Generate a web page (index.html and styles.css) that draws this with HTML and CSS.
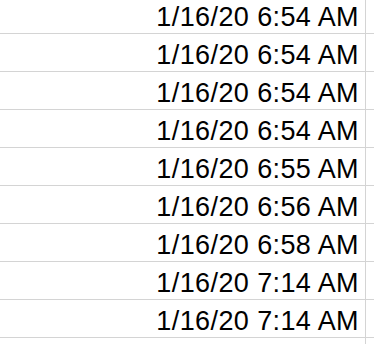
FILE: index.html
```html
<!DOCTYPE html>
<html lang="en">
<head>
    <meta charset="UTF-8">
    <title>Sheet</title>
    <link rel="stylesheet" href="styles.css">
</head>
<body>
    <div class="sheet">
        <div class="row first"><div class="cell">1/16/20 6:54 AM</div><div class="cell empty"></div></div>
        <div class="row"><div class="cell">1/16/20 6:54 AM</div><div class="cell empty"></div></div>
        <div class="row"><div class="cell">1/16/20 6:54 AM</div><div class="cell empty"></div></div>
        <div class="row"><div class="cell">1/16/20 6:54 AM</div><div class="cell empty"></div></div>
        <div class="row"><div class="cell">1/16/20 6:55 AM</div><div class="cell empty"></div></div>
        <div class="row"><div class="cell">1/16/20 6:56 AM</div><div class="cell empty"></div></div>
        <div class="row"><div class="cell">1/16/20 6:58 AM</div><div class="cell empty"></div></div>
        <div class="row"><div class="cell">1/16/20 7:14 AM</div><div class="cell empty"></div></div>
        <div class="row"><div class="cell">1/16/20 7:14 AM</div><div class="cell empty"></div></div>
        <div class="row"><div class="cell"></div><div class="cell empty"></div></div>
    </div>
</body>
</html>
```

FILE: styles.css
```css
* {
    margin: 0;
    padding: 0;
    box-sizing: border-box;
}

body {
    background-color: #ffffff;
    font-family: 'Liberation Sans', Arial, sans-serif;
}

.sheet {
    display: flex;
    flex-direction: column;
    height: 100vh;
    overflow: hidden;
}

.row {
    display: grid;
    grid-template-columns: 366px 1fr;
    flex: 0 0 38px;
    border-bottom: 1px solid #d4d4d4;
}

.row.first {
    flex-basis: 34px;
}

.cell {
    display: flex;
    align-items: flex-end;
    justify-content: flex-end;
    padding: 0 6px 1px 0;
    border-right: 1px solid #d4d4d4;
    font-size: 27px;
    line-height: 30px;
    letter-spacing: 0.4px;
    color: #000000;
    white-space: nowrap;
}

.cell.empty {
    border-right: none;
}
```
